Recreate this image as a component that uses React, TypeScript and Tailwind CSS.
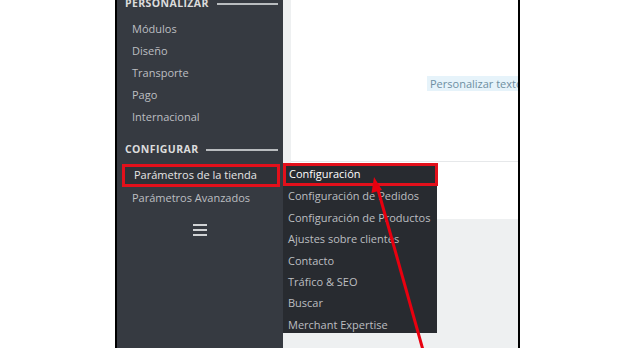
import React from "react";

const font = { fontFamily: '"Open Sans", "Noto Sans", sans-serif' };

const SectionHeader = ({ title }: { title: string }) => (
    <div className="h-[18px] flex items-center gap-[8px] pl-[8px] pr-[5px]">
        <span className="text-[10.5px] font-bold tracking-[0.4px] text-[#dcdcdc] uppercase whitespace-nowrap">{title}</span>
        <div className="flex-1 h-[2px] bg-[#b9bcbf]" />
    </div>
);

const SidebarItem = ({ label }: { label: string }) => (
    <div className="h-[22px] flex items-center pl-[15px] text-[11px] text-[#bdbfc1] whitespace-nowrap">{label}</div>
);

const App = () => {
    const personalizar = ["Módulos", "Diseño", "Transporte", "Pago", "Internacional"];
    const submenu = [
        "Configuración",
        "Configuración de Pedidos",
        "Configuración de Productos",
        "Ajustes sobre clientes",
        "Contacto",
        "Tráfico & SEO",
        "Buscar",
        "Merchant Expertise",
    ];

    return (
        <div className="w-[640px] h-[348px] bg-white flex relative overflow-hidden" style={font}>
            <div className="w-[115px] shrink-0" />
            <div className="w-[405px] shrink-0 h-full border-x-2 border-black flex">
                {/* sidebar */}
                <div className="w-[166px] shrink-0 h-full bg-[#363a41] flex flex-col">
                    <div className="mt-[-5px]">
                        <SectionHeader title="Personalizar" />
                    </div>
                    <div className="mt-[5px]">
                        {personalizar.map((item, index) => (
                            <SidebarItem key={`p_${index}`} label={item} />
                        ))}
                    </div>
                    <div className="mt-[13px]">
                        <SectionHeader title="Configurar" />
                    </div>
                    <div className="mt-[5px]">
                        <div className="h-[23px] ml-[5px] mr-[3px] flex items-center pl-[9px] text-[11px] text-[#e6e6e6] bg-[#2f3238] border-[3px] border-[#e3101b] whitespace-nowrap">
                            Parámetros de la tienda
                        </div>
                        <SidebarItem label="Parámetros Avanzados" />
                    </div>
                    <div className="mt-[15px] flex justify-center">
                        <div className="w-[14px] flex flex-col gap-[3px]">
                            <div className="h-[2px] bg-[#d0d2d4]" />
                            <div className="h-[2px] bg-[#d0d2d4]" />
                            <div className="h-[2px] bg-[#d0d2d4]" />
                        </div>
                    </div>
                </div>

                {/* main */}
                <div className="flex-1 min-w-0 h-full bg-[#eef0f1] relative pl-[8px]">
                    <div className="bg-white h-[162px] border-b border-[#e6e8ea] overflow-hidden pt-[76px] pl-[136px] flex items-start">
                        <div className="shrink-0 whitespace-nowrap bg-[#e6f3fa] text-[#6e8fa2] text-[11px] leading-[15px] px-[3px]">
                            Personalizar texto de la tienda
                        </div>
                    </div>
                    <div className="bg-white h-[57px]" />

                    {/* submenu */}
                    <div className="absolute left-0 top-[163px] w-[154px] h-[170px] bg-[#282b30]">
                        {submenu.map((item, index) => (
                            <div
                                key={`s_${index}`}
                                className={
                                    index === 0
                                        ? "h-[23px] -mr-[1px] flex items-center pl-[3px] text-[11px] text-white border-[3px] border-[#e3101b] whitespace-nowrap"
                                        : "h-[21.4px] flex items-center pl-[5px] text-[11px] text-[#bcbec0] whitespace-nowrap"
                                }
                            >
                                {item}
                            </div>
                        ))}
                    </div>
                </div>
            </div>

            {/* annotation arrow */}
            <svg className="absolute left-0 top-0" width="640" height="348" viewBox="0 0 640 348">
                <line x1="423" y1="350" x2="377" y2="186" stroke="#e8000f" strokeWidth="3" />
                <polygon points="374,177 382,190 371.5,193" fill="#e8000f" />
            </svg>
        </div>
    );
};

export default App;
